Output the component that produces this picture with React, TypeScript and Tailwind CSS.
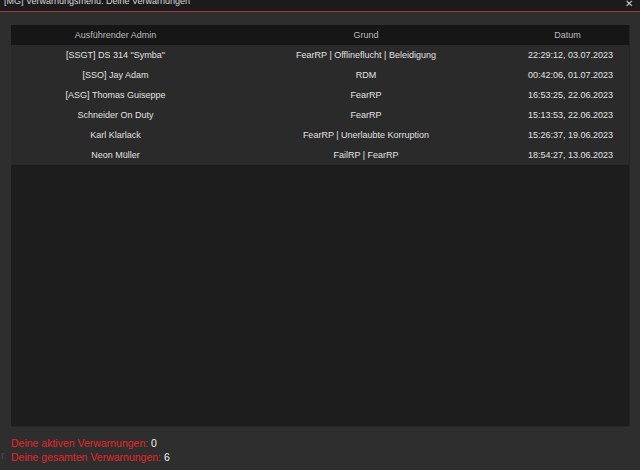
import React from "react";

const rows = [
  ["[SSGT] DS 314 \"Symba\"", "FearRP | Offlineflucht | Beleidigung", "22:29:12, 03.07.2023"],
  ["[SSO] Jay Adam", "RDM", "00:42:06, 01.07.2023"],
  ["[ASG] Thomas Guiseppe", "FearRP", "16:53:25, 22.06.2023"],
  ["Schneider On Duty", "FearRP", "15:13:53, 22.06.2023"],
  ["Karl Klarlack", "FearRP | Unerlaubte Korruption", "15:26:37, 19.06.2023"],
  ["Neon Müller", "FailRP | FearRP", "18:54:27, 13.06.2023"],
];

export default function App() {
  return (
    <div
      className="w-[640px] h-[470px] bg-[#2e2e2e] flex flex-col relative overflow-hidden"
      style={{ fontFamily: '"Liberation Sans", Arial, sans-serif' }}
    >
      <div className="h-[11px] bg-[#1b1b1b] border-b border-[#a63a3a] flex items-start justify-between overflow-hidden shrink-0 box-content">
        <div className="text-[9px] leading-none text-[#d8d8d8] pl-[4px] -mt-[3px]">
          [MG] Verwarnungsmenu: Deine Verwarnungen
        </div>
        <div className="text-[10px] leading-none text-[#d0d0d0] pr-[7px] -mt-[1px]">✕</div>
      </div>
      <div className="pt-[13px] pl-[11px] pr-[10px] shrink-0">
        <div className="h-[402px] bg-[#1d1d1d] flex flex-col border-r border-b border-[#262626]">
          <div className="grid grid-cols-[209px_292px_1fr] h-[20px] pt-[2px] bg-[#161616] items-center text-[9px] text-[#bcbcbc]">
            <div className="text-center">Ausführender Admin</div>
            <div className="text-center">Grund</div>
            <div className="text-center pr-[6px]">Datum</div>
          </div>
          {rows.map((r, i) => (
            <div
              key={i}
              className="grid grid-cols-[209px_292px_1fr] h-[20px] pt-[2px] bg-[#2a2a2a] items-center text-[9px] text-[#e2e2e2]"
            >
              <div className="text-center">{r[0]}</div>
              <div className="text-center">{r[1]}</div>
              <div className="text-center">{r[2]}</div>
            </div>
          ))}
        </div>
      </div>
      <div className="pl-[11px] pt-[9px] text-[10.5px] leading-[14px] text-[#e3262c]">
        <div>
          Deine aktiven Verwarnungen: <span className="text-[#f0f0f0]">0</span>
        </div>
        <div>
          Deine gesamten Verwarnungen: <span className="text-[#f0f0f0]">6</span>
        </div>
      </div>
      <div className="absolute left-[1px] top-[448px] text-[11px] leading-[14px] text-[#4a4a4a]">r</div>
    </div>
  );
}
